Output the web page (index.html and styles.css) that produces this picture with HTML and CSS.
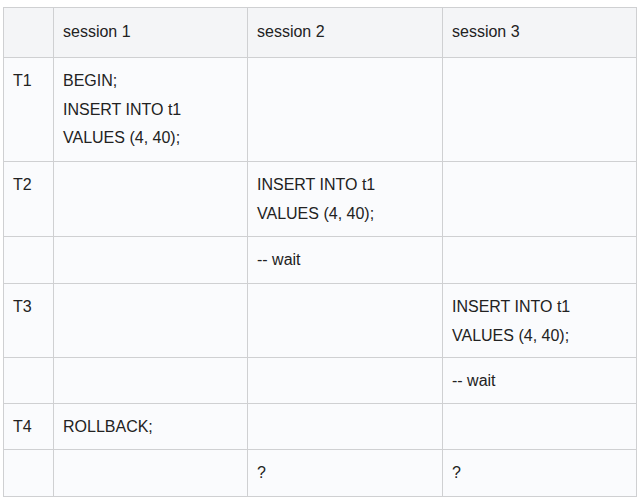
FILE: index.html
```html
<!DOCTYPE html>
<html>
<head>
<meta charset="utf-8">
<link rel="stylesheet" href="styles.css">
</head>
<body>
<table class="grid">
  <colgroup>
    <col class="c0"><col class="c1"><col class="c2"><col class="c3">
  </colgroup>
  <thead>
    <tr class="h50"><th></th><th>session 1</th><th>session 2</th><th>session 3</th></tr>
  </thead>
  <tbody>
    <tr class="h104"><td>T1</td><td>BEGIN;<br>INSERT INTO t1<br>VALUES (4, 40);</td><td></td><td></td></tr>
    <tr class="h75"><td>T2</td><td></td><td>INSERT INTO t1<br>VALUES (4, 40);</td><td></td></tr>
    <tr class="h47"><td></td><td></td><td>-- wait</td><td></td></tr>
    <tr class="h74"><td>T3</td><td></td><td></td><td>INSERT INTO t1<br>VALUES (4, 40);</td></tr>
    <tr class="h46"><td></td><td></td><td></td><td>-- wait</td></tr>
    <tr class="h46"><td>T4</td><td>ROLLBACK;</td><td></td><td></td></tr>
    <tr class="h47"><td></td><td></td><td>?</td><td>?</td></tr>
  </tbody>
</table>
</body>
</html>
```

FILE: styles.css
```css
html, body {
  margin: 0;
  padding: 0;
  background: #ffffff;
}
body {
  padding: 7px 0 0 3px;
  font-family: "Liberation Sans", Arial, sans-serif;
  color: #222222;
}
.grid {
  border-collapse: collapse;
  table-layout: fixed;
  width: 633px;
  font-size: 16px;
  line-height: 28.5px;
}
.c0 { width: 50px; }
.c1 { width: 194px; }
.c2 { width: 195px; }
.c3 { width: 194px; }
.grid th, .grid td {
  border: 1px solid #cfd0d2;
  vertical-align: top;
  text-align: left;
  padding: 9px 8px 0 9px;
  font-weight: normal;
  white-space: nowrap;
  overflow: hidden;
}
.grid th {
  background: #f4f5f7;
  padding-top: 10px;
}
.grid td {
  background: #fafbfd;
}
.grid td:first-child, .grid th:first-child {
  padding-left: 9px;
}
.h50 { height: 50px; }
.h104 { height: 104px; }
.h75 { height: 75px; }
.h74 { height: 74px; }
.h47 { height: 47px; }
.h46 { height: 46px; }
```
